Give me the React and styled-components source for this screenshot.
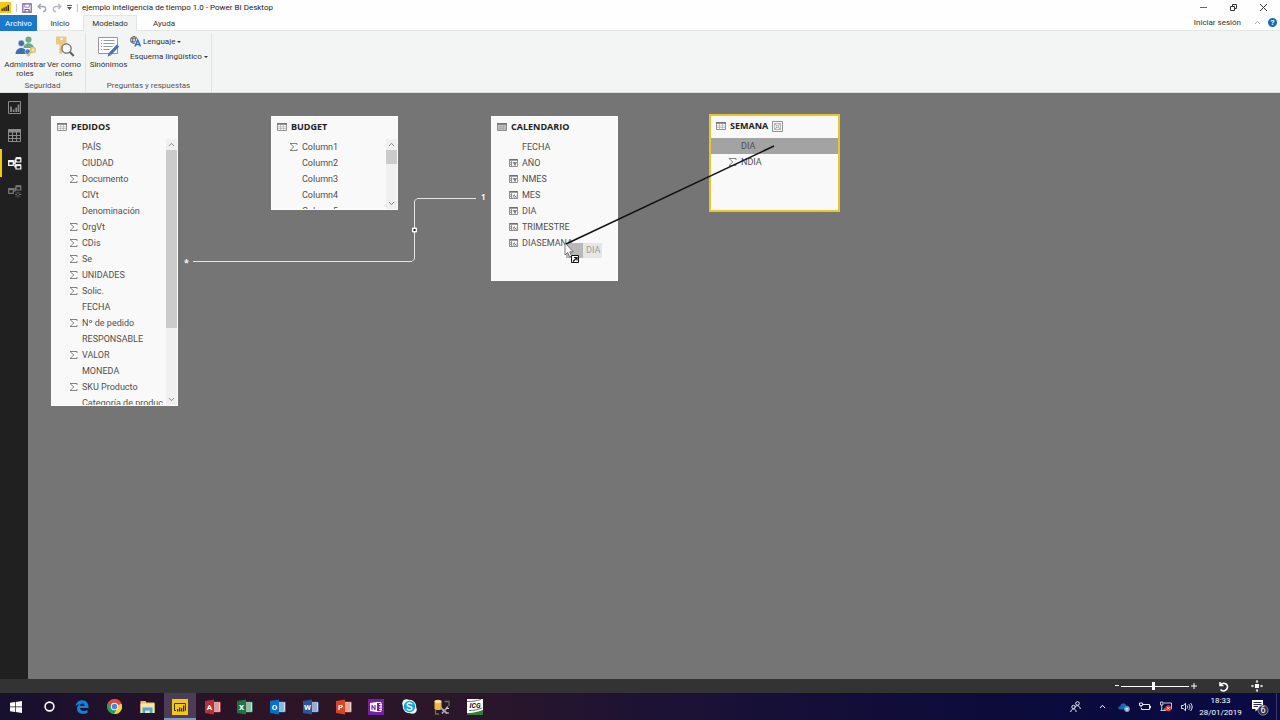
import React from 'react';
import styled, { createGlobalStyle } from 'styled-components';

const GlobalStyle = createGlobalStyle`
  * {
    box-sizing: border-box;
  }

  body {
    margin: 0;
    font-family: Roboto, 'Open Sans', sans-serif;
    font-size: 8px;
    color: #333;
  }

  button {
    margin: 0;
    padding: 0;
    border: 0;
    background: none;
    font: inherit;
    color: inherit;
    cursor: pointer;
  }

  svg {
    display: block;
    flex: none;
  }
`;

const AppWrapper = styled.div`
  display: flex;
  flex-direction: column;
  height: 100vh;
  overflow: hidden;
`;

/* ---------- title bar ---------- */

const TitleBar = styled.header`
  display: flex;
  align-items: center;
  flex: none;
  height: 15px;
  padding-right: 2px;
  background-color: #fefefe;
`;

const QuickAccess = styled.div`
  display: flex;
  align-items: center;
  gap: 5px;
  padding-right: 4px;
`;

const Divider = styled.span`
  width: 1px;
  height: 8px;
  background-color: #c4c4c4;
`;

const DocumentTitle = styled.h1`
  flex: 1;
  margin: 0;
  font-size: 8px;
  line-height: 16px;
  font-weight: 400;
  color: #222;
`;

const WindowButtons = styled.div`
  display: flex;

  button {
    display: flex;
    align-items: center;
    justify-content: center;
    width: 30px;
    height: 15px;
  }
`;

/* ---------- ribbon ---------- */

const TabBar = styled.nav`
  display: flex;
  flex: none;
  height: 16px;
  background-color: #fefefe;
  border-bottom: 1px solid #e3e5e5;
`;

const FileTab = styled.button`
  width: 37px;
  height: 16px;
  background-color: #1a79c9 !important;
  color: #fff !important;
`;

const Tab = styled.button`
  width: ${(props) => props.$width}px;
  height: 16px;
  ${(props) =>
    props.$active &&
    `
    background-color: #f3f5f5 !important;
    border: 1px solid #e3e5e5 !important;
    border-bottom: 0 !important;
  `}
`;

const Account = styled.div`
  display: flex;
  align-items: center;
  gap: 13px;
  margin-left: auto;
  padding-right: 3px;
`;

const HelpButton = styled.button`
  width: 9px;
  height: 9px;
  margin-left: -6px !important;
  border-radius: 50%;
  background-color: #0f6cbd !important;
  color: #fff !important;
  line-height: 9px !important;
  font-weight: 700 !important;
`;

const Ribbon = styled.section`
  display: flex;
  flex: none;
  height: 62px;
  background-color: #f3f5f5;
  border-bottom: 1px solid #dcdede;
`;

const RibbonGroup = styled.div`
  display: flex;
  flex-direction: column;
  width: ${(props) => props.$width}px;
  margin-top: 2px;
  border-right: 1px solid #e1e3e3;
`;

const RibbonItems = styled.div`
  display: flex;
  flex: 1;
  gap: ${(props) => props.$gap || 0}px;
  padding-left: 4px;
`;

const RibbonButton = styled.button`
  display: flex;
  flex-direction: column;
  align-items: center;
  width: ${(props) => props.$width}px;
  padding-top: 3px !important;
  line-height: 9px !important;
  text-align: center;

  svg {
    margin-bottom: 3px;
  }
`;

const RibbonStack = styled.div`
  display: flex;
  flex-direction: column;
  align-items: flex-start;
  padding-top: 1px;
`;

const SmallButton = styled.button`
  display: flex;
  align-items: center;
  gap: 2px;
  height: 15px;
  white-space: nowrap;
`;

const Caret = styled.span`
  border: 2px solid transparent;
  border-top-color: #333;
  border-bottom: 0;
`;

const GroupLabel = styled.div`
  height: 12px;
  line-height: 12px;
  text-align: center;
  color: #555;
`;

/* ---------- workspace ---------- */

const Workspace = styled.div`
  display: flex;
  flex: 1;
  min-height: 0;
`;

const ViewBar = styled.nav`
  flex: none;
  width: 28px;
  background-color: #212020;
`;

const ViewButton = styled.button`
  display: flex;
  align-items: center;
  width: 28px;
  height: 28px;
  padding-left: 6px !important;
  border-left: 2px solid ${(props) => (props.$active ? '#f2c811' : 'transparent')} !important;
  color: ${(props) => props.$color} !important;
`;

const Canvas = styled.main`
  position: relative;
  flex: 1;
  overflow: hidden;
  background-color: #757575;
`;

const TableCard = styled.section`
  position: absolute;
  left: ${(props) => props.$x}px;
  top: ${(props) => props.$y}px;
  display: flex;
  flex-direction: column;
  width: ${(props) => props.$width}px;
  height: ${(props) => props.$height}px;
  overflow: hidden;
  background-color: #f9f9f9;
  border: ${(props) => (props.$selected ? '2px solid #e8c62c' : '1px solid #fdfdfd')};
`;

const CardHeader = styled.header`
  display: flex;
  align-items: center;
  flex: none;
  gap: 4px;
  height: 22px;
  padding: 0 0 2px 5px;
  color: #777;
`;

const CardTitle = styled.h2`
  margin: 0;
  font-family: 'Open Sans', sans-serif;
  font-size: 9px;
  line-height: 16px;
  font-weight: 700;
  color: #222;
`;

const CardBody = styled.div`
  display: flex;
  flex: 1;
  min-height: 0;
`;

const FieldList = styled.ul`
  flex: 1;
  margin: 0;
  padding: 0;
  overflow: hidden;
  list-style: none;
`;

const Field = styled.li`
  display: grid;
  grid-template-columns: 9px 1fr;
  align-items: center;
  gap: 4px;
  height: 16px;
  padding-left: 17px;
  font-size: 9px;
  line-height: 16px;
  white-space: nowrap;
  color: #505050;
  background-color: ${(props) => (props.$selected ? '#a3a3a3' : 'transparent')};
`;

const ScrollBar = styled.div`
  display: flex;
  flex-direction: column;
  flex: none;
  align-items: center;
  width: 11px;
  background-color: #f0f0f0;
  color: #8a8a8a;
`;

const ScrollArrow = styled.button`
  display: flex;
  align-items: center;
  justify-content: center;
  flex: none;
  width: 11px;
  height: 11px;
`;

const ScrollTrack = styled.div`
  flex: 1;
  width: 11px;
`;

const ScrollThumb = styled.div`
  height: ${(props) => props.$size}px;
  background-color: #cbcbcb;
`;

const Links = styled.svg`
  position: absolute;
  inset: 0;
  width: 100%;
  height: 100%;
  pointer-events: none;
`;

const Cardinality = styled.span`
  position: absolute;
  left: ${(props) => props.$x}px;
  top: ${(props) => props.$y}px;
  font-family: 'Open Sans', sans-serif;
  font-size: ${(props) => props.$size}px;
  line-height: 12px;
  font-weight: 700;
  color: #f4f4f4;
`;

const DragGhost = styled.div`
  position: absolute;
  left: 538px;
  top: 150px;
  width: 36px;
  height: 15px;
  padding-left: 20px;
  background: linear-gradient(to right, #b8b8b8 17px, #e6e6e6 17px);
  font-size: 9px;
  line-height: 15px;
  color: #9c9c9c;
`;

/* ---------- status bar ---------- */

const StatusBar = styled.footer`
  display: flex;
  align-items: center;
  justify-content: flex-end;
  flex: none;
  height: 14px;
  padding-right: 17px;
  background-color: #333;
  color: #fff;
`;

const ZoomControl = styled.div`
  display: flex;
  align-items: center;
  gap: 2px;
  margin-right: 21px;

  button {
    display: flex;
    align-items: center;
  }
`;

const ZoomSlider = styled.input`
  width: 68px;
  height: 10px;
  margin: 0;
  appearance: none;
  background: linear-gradient(#fff, #fff) center / 100% 1px no-repeat;

  &::-webkit-slider-thumb {
    appearance: none;
    width: 3px;
    height: 8px;
    background-color: #fff;
  }
`;

const StatusButton = styled.button`
  margin-left: ${(props) => props.$gap || 0}px !important;
`;

/* ---------- taskbar ---------- */

const TaskBar = styled.footer`
  display: flex;
  align-items: stretch;
  justify-content: space-between;
  flex: none;
  height: 27px;
  background: linear-gradient(to right, #17102e 0%, #20112c 8%, #2d1426 20%, #2a162b 38%, #1c1235 52%, #0c0b3a 78%, #0a0a46 100%);
  color: #fff;
`;

const TaskButtons = styled.div`
  display: grid;
  grid-template-columns: repeat(15, 1fr);
  width: 491px;
`;

const TaskButton = styled.button`
  display: flex;
  align-items: center;
  justify-content: center;
  ${(props) =>
    props.$active &&
    `
    background-color: #4a3d55 !important;
    border-bottom: 2px solid #8095c4 !important;
    padding-top: 2px !important;
  `}
`;

const Tray = styled.div`
  display: flex;
  align-items: center;

  button {
    display: flex;
    justify-content: center;
    width: 21px;
  }
`;

const PeopleButton = styled.div`
  margin-right: 6px;
`;

const Clock = styled.time`
  width: 47px;
  font-size: 8px;
  line-height: 12px;
  text-align: center;
`;

const Notifications = styled.div`
  display: flex;
  align-items: center;
  justify-content: center;
  align-self: stretch;
  width: 33px;
  margin-right: 3px;
  border-right: 1px solid #3c3c66;
`;

/* ---------- icons ---------- */

function PowerBiLogo() {
  return (
    <svg width="16" height="16" viewBox="0 0 16 16">
      <path fill="#f2c811" d="M0 0h16v16H0z" />
      <path fill="none" stroke="#3a3216" d="M4 11.500H2.500v-7h11v7H13" />
      <path fill="#2b2618" d="M5 10h1.300v2.500H5zM7 8.500h1.300v4H7zM9 9.300h1.300v3.200H9zM11 6.500h1.300v6H11z" />
    </svg>
  );
}

function SmallPowerBiLogo() {
  return (
    <svg width="11" height="11" viewBox="0 0 11 11">
      <path fill="#f2c811" d="M0 0h11v11H0z" />
      <path fill="#2b2618" d="M1.500 6.500h1.300V9H1.500zM3.500 5.500h1.300V9H3.500zM5.500 4.500h1.300V9H5.500zM7.500 3H9v6H7.500z" />
    </svg>
  );
}

function TableIcon({ filled }) {
  return (
    <svg width="10" height="8" viewBox="0 0 10 8">
      <path fill={filled ? '#c3c3cd' : '#fff'} stroke="currentColor" strokeWidth=".8" d="M.5.5h9v7h-9z" />
      <path fill="currentColor" d="M0 0h10v1.800H0z" />
      <path stroke="#a0a0a0" strokeWidth=".6" d="M1 3.800h8M1 5.600h8M3.500 2v5.500M6.500 2v5.500" />
    </svg>
  );
}

function SigmaIcon() {
  return (
    <svg width="9" height="8" viewBox="0 0 9 8" fill="none" stroke="#666" strokeWidth=".8">
      <path d="M8 2V.5H1L4.800 4 1 7.500h7V6" />
    </svg>
  );
}

function CalcIcon({ fx }) {
  return (
    <svg width="9" height="8" viewBox="0 0 9 8" fill="none" stroke="#666" strokeWidth=".7">
      <path d="M.5.5h8v7h-8z" />
      <path strokeWidth="1.400" d="M.5.900h8" />
      <path d="M2.600 2v5.500M1 3.800h1.500M1 5.600h1.500" />
      {fx ? (
        <path d="M3.800 6.800c1 0 1-3.500 2.200-3.500M4.200 4.800h1.400M5.700 6.800l2-2.200M5.800 4.800l1.800 2" />
      ) : (
        <path fill="#666" d="M4.300 3.600h3.200L6.200 5v1.500L5.600 6V5z" />
      )}
    </svg>
  );
}

function SourceIcon() {
  return (
    <svg width="11" height="11" viewBox="0 0 11 11" fill="none" stroke="#777" strokeWidth=".8">
      <path d="M.5.5h10v10H.5z" />
      <path
        strokeWidth=".5"
        d="M2.500 2.500h6v6h-6zM4.300 4.300h2.400v2.400H4.300zM2.500 2.500l1.800 1.800M8.500 2.500 6.700 4.300M2.500 8.500l1.800-1.800M8.500 8.500 6.700 6.700"
      />
    </svg>
  );
}

function Chevron({ up, color = 'currentColor' }) {
  return (
    <svg width="7" height="5" viewBox="0 0 7 5" fill="none" stroke={color}>
      <path d={up ? 'M1 4l2.500-2.700L6 4' : 'M1 1l2.500 2.700L6 1'} />
    </svg>
  );
}

function SaveIcon() {
  return (
    <svg width="10" height="10" viewBox="0 0 10 10" fill="none" stroke="#7a56a5" strokeWidth="1.200">
      <path d="M.8.8h8.400v8.400H.8z" />
      <path d="M2.700 1v3.200h4.600V1" strokeWidth=".7" />
      <path d="M3 9V6.500h4V9" />
    </svg>
  );
}

function UndoIcon({ redo }) {
  return (
    <svg width="10" height="10" viewBox="0 0 10 10" fill="none" stroke={redo ? '#b5bac3' : '#9aa5b8'} strokeWidth="1.400">
      <g transform={redo ? 'matrix(-1 0 0 1 10 0)' : undefined}>
        <path d="M3.700 1 1.200 3.500 3.700 6M1.500 3.500h4.300c4 0 3.600 5 .2 5.300" />
      </g>
    </svg>
  );
}

function CustomizeIcon() {
  return (
    <svg width="5" height="5" viewBox="0 0 5 5">
      <path fill="#555" d="M0 0h5v1H0zM0 2h5L2.500 5z" />
    </svg>
  );
}

function RolesIcon() {
  return (
    <svg width="21" height="21" viewBox="0 0 21 21">
      <circle cx="13.500" cy="3.600" r="3.100" fill="#6aaa8d" />
      <path fill="#6aaa8d" d="M8.500 12c0-6.500 10-6.500 10.500 0z" />
      <circle cx="6.300" cy="7.300" r="3.200" fill="#3f6fae" stroke="#f3f5f5" strokeWidth=".6" />
      <path fill="#3f6fae" d="M.5 18c.3-8 11-8 11.500 0z" />
      <circle cx="12.700" cy="15.800" r="2.700" fill="#4c7fba" stroke="#f3f5f5" strokeWidth=".5" />
      <path fill="none" stroke="#e3c17c" strokeWidth="2" d="m12 20 5.500-5.200M13.200 18.300l1.500 1.600" />
      <circle cx="18" cy="14" r="2.300" fill="#f3e4c0" stroke="#e3c17c" strokeWidth="1.700" />
    </svg>
  );
}

function ViewAsIcon() {
  return (
    <svg width="21" height="21" viewBox="0 0 21 21" fill="none">
      <path fill="#ecc883" d="M2 .5h10.500v8H9v6.500L7 18.500l-2.500-2.200 1.200-1.500-1.200-1.600 1-1.500V8.500H2z" />
      <circle cx="7.500" cy="3" r="1.200" fill="#fff" />
      <circle cx="12.500" cy="12.500" r="4.600" fill="#f8fafa" stroke="#6b6b6b" strokeWidth="1.300" />
      <path stroke="#5f5f5f" strokeWidth="2" d="m15.800 16 4 4" />
    </svg>
  );
}

function SynonymsIcon() {
  return (
    <svg width="21" height="21" viewBox="0 0 21 21" fill="none">
      <path fill="#fff" stroke="#969696" d="M.5 1.500h19v16H.5z" />
      <path stroke="#8f9aa8" d="M3 4.500h1M5.500 4.500h11M3 7.500h1M5.500 7.500h11M3 10.500h1M5.500 10.500h9M3 13.500h1M5.500 13.500h6" />
      <path stroke="#3f75b4" strokeWidth="3.200" d="m12 18 8-8.500" />
      <path fill="#3f75b4" d="m9.500 20.500 1.200-3.500 2.500 2.300z" />
    </svg>
  );
}

function LanguageIcon() {
  return (
    <svg width="11" height="11" viewBox="0 0 11 11" fill="none">
      <g stroke="#555" strokeWidth=".8">
        <circle cx="4" cy="4" r="3.500" />
        <ellipse cx="4" cy="4" rx="1.500" ry="3.500" />
        <path d="M.6 2.700h6.800M.6 5.300h6.800" />
      </g>
      <path stroke="#f3f5f5" strokeWidth="3" d="M5 10.500 7.700 4l2.800 6.500" />
      <path stroke="#2e75b6" strokeWidth="1.500" d="M5 10.500 7.700 4l2.800 6.500M6 8.500h3.500" />
    </svg>
  );
}

function ReportIcon() {
  return (
    <svg width="13" height="13" viewBox="0 0 13 13" fill="none" stroke="currentColor">
      <path d="M12.500 12.500H.5V.5h12z" />
      <path strokeWidth="1.700" d="M3 11V5.500M5.600 11V8.500M8.200 11V6.500M10.500 11V3.500" />
    </svg>
  );
}

function DataIcon() {
  return (
    <svg width="13" height="13" viewBox="0 0 13 13" fill="none" stroke="currentColor">
      <path d="M.5.5h12v12H.5zM.5 6.500h12M.5 9.500h12M4.500 3v9.500M8.500 3v9.500" />
      <path strokeWidth="3" d="M0 2h13" />
    </svg>
  );
}

function ModelIcon({ sparkle }) {
  return (
    <svg width="14" height="13" viewBox="0 0 14 13" fill="none" stroke="currentColor" strokeWidth="1.200">
      <path d="M.7 3.700h4.600v4.600H.7zM8 1h4.800v4H8zM5.500 6H7V3h1" />
      <path strokeWidth="2" d="M.5 4.200h5M8 1.200h5" />
      {sparkle ? (
        <path strokeWidth=".9" d="M10 6.500v2M10 10.500v2M7 9.500h2M11 9.500h2.500M8 7.500l1 1M12 7.500l-1 1M8 11.500l1-1M12 11.500l-1-1" />
      ) : (
        <>
          <path d="M8 8h4.800v4H8zM5.500 6H7v4h1" />
          <path strokeWidth="2" d="M8 8.200h5" />
        </>
      )}
    </svg>
  );
}

function OfficeIcon({ letter, color }) {
  return (
    <svg width="16" height="16" viewBox="0 0 16 16">
      <path fill="#f5f5f5" stroke={color} strokeWidth=".8" d="M8 3h7.300v10H8z" />
      <path stroke={color} strokeWidth=".9" d="M9 5h5M9 7h5M9 9h5M9 11h5" />
      <path fill={color} d="M0 2 9 .5v15L0 14z" />
      <text x="4.500" y="11" fill="#fff" fontSize="8" fontWeight="700" textAnchor="middle">
        {letter}
      </text>
    </svg>
  );
}

function WindowsIcon() {
  return (
    <svg width="12" height="12" viewBox="0 0 12 12" fill="#fff">
      <path d="M0 1.700 5 1v4.600H0zM5.700.9 12 0v5.600H5.700zM0 6.300h5V11l-5-.7zM5.700 6.300H12V12l-6.300-.9z" />
    </svg>
  );
}

function CortanaIcon() {
  return (
    <svg width="11" height="11" viewBox="0 0 11 11" fill="none">
      <circle cx="5.500" cy="5.500" r="4.400" stroke="#fff" strokeWidth="1.600" />
    </svg>
  );
}

function EdgeIcon() {
  return (
    <svg width="14" height="14" viewBox="0 0 14 14">
      <path
        fill="#1580d8"
        d="M.5 6.300C1 2.300 3.800.2 7.200.2c4.300 0 6.300 3 6.300 6.400V8H5c.2 3.200 4.700 3.600 7.500 1.900v2.800C7.500 15.300 2 13.400 2 8.700c0-2 1-3.600 2.800-4.500C3 4.300 1.500 5 .5 6.300zM5 5.700h4.600C9.500 2.800 5.400 2.800 5 5.700z"
      />
    </svg>
  );
}

function ChromeIcon() {
  return (
    <svg width="15" height="15" viewBox="0 0 16 16">
      <circle cx="8" cy="8" r="8" fill="#dd4b3e" />
      <path fill="#fccd3f" d="M8 8 15.500 5A8 8 0 0 1 7 16z" />
      <path fill="#25a25a" d="M1.100 4A8 8 0 0 0 7.500 16L11 10H5z" />
      <path fill="#dd4b3e" d="M1.100 4A8 8 0 0 1 15.300 4.500H8L5 9z" />
      <circle cx="8" cy="8" r="3.900" fill="#fff" />
      <circle cx="8" cy="8" r="3" fill="#4385f5" />
    </svg>
  );
}

function FolderIcon() {
  return (
    <svg width="15" height="14" viewBox="0 0 15 14">
      <path fill="#e8be5e" d="M.5 1h5l1 1.500h8V13H.5z" />
      <path fill="#fbe5a0" d="M.5 3.500h14V13H.5z" />
      <path fill="#47a9dc" d="M2.500 7.500h10V13h-2.700v-2.500H5.200V13H2.500z" />
    </svg>
  );
}

function SkypeIcon() {
  return (
    <svg width="15" height="15" viewBox="0 0 15 15">
      <circle cx="4.500" cy="4.500" r="4.300" fill="#eaf7fd" />
      <circle cx="10.500" cy="10.500" r="4.300" fill="#eaf7fd" />
      <circle cx="7.500" cy="7.500" r="6.700" fill="#eaf7fd" />
      <circle cx="7.500" cy="7.500" r="5.700" fill="#16a5e2" />
      <path
        fill="none"
        stroke="#fff"
        strokeWidth="1.500"
        d="M10 5.400C9.600 3.500 5.200 3.400 5.200 5.700c0 2.200 4.800 1.200 4.800 3.600 0 2.300-4.600 2.300-5.100.2"
      />
    </svg>
  );
}

function DatabaseToolsIcon() {
  return (
    <svg width="16" height="16" viewBox="0 0 16 16" fill="none">
      <path fill="#f0b83c" d="M.5 2.500v7c0 2 7 2 7 0v-7z" />
      <ellipse cx="4" cy="2.500" rx="3.500" ry="1.700" fill="#fbe19b" />
      <path stroke="#a8a8a8" strokeWidth="1.800" d="m6.500 8.500 6.500 6M14 7.500l-6 7" />
      <path stroke="#5d7653" strokeWidth="1.300" d="M10.500 2.500H15V7M1.500 11v4H5" />
      <path stroke="#ccc" d="M12 9.500h3M12.500 14h2.500" />
    </svg>
  );
}

function IcgIcon() {
  return (
    <svg width="16" height="16" viewBox="0 0 16 16">
      <path fill="#fff" d="M0 0h16v16H0z" />
      <path fill="#347c36" d="M0 14c4 0 9-.5 16-3v5H0z" />
      <path fill="none" stroke="#333" strokeWidth=".7" d="M0 2.500C5 2.500 9 2 14 .5M2 11.500c5 0 9-1 13-2.500" />
      <text x="8" y="9" fill="#111" fontSize="7" fontStyle="italic" fontWeight="700" textAnchor="middle">
        ICG
      </text>
    </svg>
  );
}

function OneNoteIcon() {
  return (
    <svg width="16" height="16" viewBox="0 0 16 16">
      <path fill="#7c1fa6" d="M0 0h16v16H0z" />
      <path fill="none" stroke="#fff" d="M8 3.500h5v9H8M11 5.500h3M11 8h3M11 10.500h3" />
      <path fill="#fff" d="m2 4 7-1v10l-7-1z" />
      <text x="5.500" y="10.500" fill="#7c1fa6" fontSize="7" fontWeight="700" textAnchor="middle">
        N
      </text>
    </svg>
  );
}

function PeopleIcon() {
  return (
    <svg width="11" height="12" viewBox="0 0 11 12" fill="none" stroke="#fff" strokeWidth=".9">
      <circle cx="7.500" cy="2.500" r="1.800" />
      <path d="M4.800 6.500c.5-2.600 5-2.600 5.500 1.500" />
      <circle cx="3.500" cy="6" r="1.700" />
      <path d="M.7 11c.3-4 5.200-4 5.500 0" />
    </svg>
  );
}

function CloudIcon() {
  return (
    <svg width="12" height="10" viewBox="0 0 12 10" fill="none">
      <path fill="#1769b5" d="M2 7.500C-.7 7 .3 4 2.300 4.200 2.800.7 7.200.4 8.200 3.500c2.500-.3 3.500 3.500 1 4z" />
      <circle cx="9" cy="7" r="2.900" fill="#5d9ed8" />
      <path stroke="#fff" strokeWidth=".9" d="M7.500 6.500h2.800M7.800 8h2.500" />
    </svg>
  );
}

function BatteryIcon() {
  return (
    <svg width="12" height="9" viewBox="0 0 12 9" fill="none" stroke="#fff" strokeWidth=".9">
      <path d="M4 2.500h6.500v5h-8V6M10.500 4h1v2h-1" />
      <path d="M.5 1h3v2.500h-3zM2 3.500v2" />
    </svg>
  );
}

function NetworkIcon() {
  return (
    <svg width="12" height="11" viewBox="0 0 12 11" fill="none" stroke="#ddd" strokeWidth=".9">
      <path d="M3.500 2h8v6h-8M.5 1h2.500v3H.5zM1.700 4v5.500M.5 9.500h6" />
      <circle cx="8.300" cy="7.300" r="3" fill="#e13a3a" stroke="none" />
      <path stroke="#fff" d="m7.100 6.100 2.400 2.400M9.500 6.100 7.100 8.500" />
    </svg>
  );
}

function VolumeIcon() {
  return (
    <svg width="12" height="10" viewBox="0 0 12 10" fill="none" stroke="#fff" strokeWidth=".9">
      <path d="M.5 3.500h1.700L4.500 1.300v7.400L2.200 6.500H.5zM6 3.500c.9.900.9 2.100 0 3M7.700 2.200c1.700 1.700 1.700 3.900 0 5.600M9.400 1c2.300 2.300 2.300 5.700 0 8" />
    </svg>
  );
}

function MessageIcon() {
  return (
    <svg width="18" height="18" viewBox="0 0 18 18">
      <path fill="#fff" d="M1 2h11v9H7l-2.500 2.500V11H1z" />
      <path stroke="#111040" strokeWidth=".9" d="M2.500 4.500h8M2.500 6.500h8M2.500 8.500H7" />
      <circle cx="12" cy="12.200" r="5" fill="#30304e" stroke="#aaa" strokeWidth=".7" />
      <text x="12" y="15.200" fill="#fff" fontSize="9" textAnchor="middle">
        6
      </text>
    </svg>
  );
}

function DragCursor() {
  return (
    <g>
      <path fill="#fff" stroke="#444" strokeWidth=".7" d="M537 150v12l2.700-2.500 2 4.500 2-1-2-4.200h3.500z" />
      <path fill="#fff" stroke="#111" d="M543.500 162.500h7v7h-7z" />
      <path fill="none" stroke="#111" strokeWidth="1.200" d="m545 168.500 3.700-3.700M546 164.500h3v3" />
    </g>
  );
}

/* ---------- data ---------- */

const tables = [
  {
    name: 'PEDIDOS',
    x: 23,
    y: 23,
    width: 127,
    height: 290,
    thumb: 178,
    fields: [
      ['PAÍS'],
      ['CIUDAD'],
      ['Documento', 'sum'],
      ['ClVt'],
      ['Denominación'],
      ['OrgVt', 'sum'],
      ['CDis', 'sum'],
      ['Se', 'sum'],
      ['UNIDADES', 'sum'],
      ['Solic.', 'sum'],
      ['FECHA'],
      ['Nº de pedido', 'sum'],
      ['RESPONSABLE'],
      ['VALOR', 'sum'],
      ['MONEDA'],
      ['SKU Producto', 'sum'],
      ['Categoría de produc'],
    ],
  },
  {
    name: 'BUDGET',
    x: 243,
    y: 23,
    width: 127,
    height: 94,
    thumb: 14,
    fields: [['Column1', 'sum'], ['Column2'], ['Column3'], ['Column4'], ['Column5']],
  },
  {
    name: 'CALENDARIO',
    x: 463,
    y: 23,
    width: 127,
    height: 165,
    filledIcon: true,
    fields: [
      ['FECHA'],
      ['AÑO', 'calc'],
      ['NMES', 'calc'],
      ['MES', 'fx'],
      ['DIA', 'calc'],
      ['TRIMESTRE', 'fx'],
      ['DIASEMANA', 'fx'],
    ],
  },
  {
    name: 'SEMANA',
    x: 681,
    y: 21,
    width: 131,
    height: 98,
    selected: true,
    selectedField: 'DIA',
    fields: [['DIA'], ['NDIA', 'sum']],
  },
];

const tasks = [
  ['Inicio', <WindowsIcon />],
  ['Cortana', <CortanaIcon />],
  ['Edge', <EdgeIcon />],
  ['Chrome', <ChromeIcon />],
  ['Explorador de archivos', <FolderIcon />],
  ['Power BI Desktop', <PowerBiLogo />],
  ['Access', <OfficeIcon letter="A" color="#b7303a" />],
  ['Excel', <OfficeIcon letter="X" color="#1f7345" />],
  ['Outlook', <OfficeIcon letter="O" color="#0a70c4" />],
  ['Word', <OfficeIcon letter="W" color="#2a5699" />],
  ['PowerPoint', <OfficeIcon letter="P" color="#d24625" />],
  ['OneNote', <OneNoteIcon />],
  ['Skype', <SkypeIcon />],
  ['Herramientas de datos', <DatabaseToolsIcon />],
  ['ICG', <IcgIcon />],
];

function FieldIcon({ type }) {
  if (type === 'sum') return <SigmaIcon />;
  if (type === 'calc' || type === 'fx') return <CalcIcon fx={type === 'fx'} />;
  return <span />;
}

function Table({ table }) {
  return (
    <TableCard
      $x={table.x}
      $y={table.y}
      $width={table.width}
      $height={table.height}
      $selected={table.selected}
    >
      <CardHeader>
        <TableIcon filled={table.filledIcon} />
        <CardTitle>{table.name}</CardTitle>
        {table.selected && <SourceIcon />}
      </CardHeader>
      <CardBody>
        <FieldList>
          {table.fields.map(([name, type]) => (
            <Field key={name} $selected={name === table.selectedField}>
              <FieldIcon type={type} />
              {name}
            </Field>
          ))}
        </FieldList>
        {table.thumb && (
          <ScrollBar>
            <ScrollArrow aria-label="Subir">
              <Chevron up />
            </ScrollArrow>
            <ScrollTrack>
              <ScrollThumb $size={table.thumb} />
            </ScrollTrack>
            <ScrollArrow aria-label="Bajar">
              <Chevron />
            </ScrollArrow>
          </ScrollBar>
        )}
      </CardBody>
    </TableCard>
  );
}

export default function App() {
  return (
    <AppWrapper>
      <GlobalStyle />
      <TitleBar>
        <QuickAccess>
          <SmallPowerBiLogo />
          <Divider />
          <button aria-label="Guardar">
            <SaveIcon />
          </button>
          <button aria-label="Deshacer">
            <UndoIcon />
          </button>
          <button aria-label="Rehacer">
            <UndoIcon redo />
          </button>
          <button aria-label="Personalizar">
            <CustomizeIcon />
          </button>
          <Divider />
        </QuickAccess>
        <DocumentTitle>ejemplo inteligencia de tiempo 1.0 - Power BI Desktop</DocumentTitle>
        <WindowButtons>
          <button aria-label="Minimizar">
            <svg width="7" height="7" stroke="#666">
              <path d="M0 3.500h7" />
            </svg>
          </button>
          <button aria-label="Restaurar">
            <svg width="7" height="7" fill="none" stroke="#333">
              <path d="M.5 2.500h4v4h-4zM2.500 2V.5h4v4H5" />
            </svg>
          </button>
          <button aria-label="Cerrar">
            <svg width="7" height="7" stroke="#333">
              <path d="m0 0 7 7M7 0 0 7" />
            </svg>
          </button>
        </WindowButtons>
      </TitleBar>

      <TabBar>
        <FileTab>Archivo</FileTab>
        <Tab $width={46}>Inicio</Tab>
        <Tab $width={54} $active>
          Modelado
        </Tab>
        <Tab $width={54}>Ayuda</Tab>
        <Account>
          <button>Iniciar sesión</button>
          <Chevron up color="#aaa" />
          <HelpButton>?</HelpButton>
        </Account>
      </TabBar>

      <Ribbon>
        <RibbonGroup $width={86}>
          <RibbonItems>
            <RibbonButton $width={42}>
              <RolesIcon />
              Administrar roles
            </RibbonButton>
            <RibbonButton $width={36}>
              <ViewAsIcon />
              Ver como roles
            </RibbonButton>
          </RibbonItems>
          <GroupLabel>Seguridad</GroupLabel>
        </RibbonGroup>
        <RibbonGroup $width={126}>
          <RibbonItems $gap={3}>
            <RibbonButton $width={37}>
              <SynonymsIcon />
              Sinónimos
            </RibbonButton>
            <RibbonStack>
              <SmallButton>
                <LanguageIcon />
                Lenguaje
                <Caret />
              </SmallButton>
              <SmallButton>
                Esquema lingüístico
                <Caret />
              </SmallButton>
            </RibbonStack>
          </RibbonItems>
          <GroupLabel>Preguntas y respuestas</GroupLabel>
        </RibbonGroup>
      </Ribbon>

      <Workspace>
        <ViewBar>
          <ViewButton aria-label="Informe" $color="#8c8c8c">
            <ReportIcon />
          </ViewButton>
          <ViewButton aria-label="Datos" $color="#8c8c8c">
            <DataIcon />
          </ViewButton>
          <ViewButton aria-label="Relaciones" $color="#ffffff" $active>
            <ModelIcon />
          </ViewButton>
          <ViewButton aria-label="Modelo" $color="#777777">
            <ModelIcon sparkle />
          </ViewButton>
        </ViewBar>

        <Canvas>
          {tables.map((table) => (
            <Table key={table.name} table={table} />
          ))}
          <Cardinality $x={156} $y={164} $size={9}>
            *
          </Cardinality>
          <Cardinality $x={453} $y={98} $size={8}>
            1
          </Cardinality>
          <DragGhost>DIA</DragGhost>
          <Links>
            <path fill="none" stroke="#e4e4e4" d="M165 168.500h219l2.500-2.500v-58l2.500-2.500h59" />
            <path fill="#fff" stroke="#fff" d="M384.500 135h4v4h-4z" />
            <path fill="#111" d="M385.500 136h2v2h-2z" />
            <path stroke="#111" strokeWidth="1.500" d="M746 53 538 151" />
            <DragCursor />
          </Links>
        </Canvas>
      </Workspace>

      <StatusBar>
        <ZoomControl>
          <button aria-label="Alejar">
            <svg width="4" height="6" stroke="#fff">
              <path d="M0 2.500h4" />
            </svg>
          </button>
          <ZoomSlider type="range" aria-label="Zoom" min="0" max="100" defaultValue="48" />
          <button aria-label="Acercar">
            <svg width="6" height="6" stroke="#fff">
              <path d="M0 3h6M3 0v6" />
            </svg>
          </button>
        </ZoomControl>
        <StatusButton aria-label="Restablecer diseño">
          <svg width="11" height="11" viewBox="0 0 11 11" fill="none" stroke="#fff" strokeWidth="1.500">
            <path d="M2 1v3.500h3.500M2 4.500c2.500-4 8-2 7.500 1.700C9 10 4.500 11 2.500 8.500" />
          </svg>
        </StatusButton>
        <StatusButton $gap={22} aria-label="Ajustar a la página">
          <svg width="12" height="12" viewBox="0 0 12 12">
            <path fill="#fff" d="M4 4h4v4H4zM6 3 4.500 1.500h3zM6 9l1.500 1.500h-3zM3 6 1.500 7.500v-3zM9 6l1.500-1.500v3z" />
            <path stroke="#fff" d="M6 0v2M6 10v2M0 6h2M10 6h2" />
          </svg>
        </StatusButton>
      </StatusBar>

      <TaskBar>
        <TaskButtons>
          {tasks.map(([name, icon]) => (
            <TaskButton key={name} aria-label={name} $active={name === 'Power BI Desktop'}>
              {icon}
            </TaskButton>
          ))}
        </TaskButtons>
        <Tray>
          <PeopleButton>
            <button aria-label="Contactos">
              <PeopleIcon />
            </button>
          </PeopleButton>
          <button aria-label="Mostrar iconos ocultos">
            <Chevron up />
          </button>
          <button aria-label="OneDrive">
            <CloudIcon />
          </button>
          <button aria-label="Batería">
            <BatteryIcon />
          </button>
          <button aria-label="Red">
            <NetworkIcon />
          </button>
          <button aria-label="Volumen">
            <VolumeIcon />
          </button>
          <Clock>
            18:33
            <br />
            28/01/2019
          </Clock>
          <Notifications>
            <button aria-label="Notificaciones">
              <MessageIcon />
            </button>
          </Notifications>
        </Tray>
      </TaskBar>
    </AppWrapper>
  );
}
